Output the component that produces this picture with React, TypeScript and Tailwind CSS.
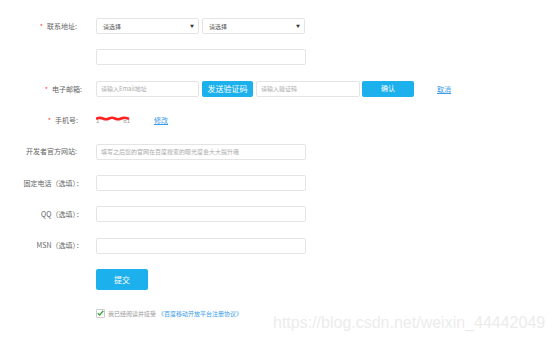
import type { ReactNode } from 'react';

function Field({ label, required, pr = 'pr-[14px]', children }: { label: string; required?: boolean; pr?: string; children?: ReactNode }) {
  return (
    <div className="flex items-center h-[16px]">
      <div className={`w-[96px] shrink-0 flex justify-end items-center text-[7px] text-[#666] ${pr}`}>
        {required && <span className="text-[#f44] mr-[4px]">*</span>}
        <span>{label}</span>
      </div>
      {children}
    </div>
  );
}

function Box({ w, placeholder }: { w: string; placeholder?: string }) {
  return (
    <div className={`${w} h-[16px] border border-[#e4e4e4] rounded-[2px] bg-white flex items-center px-[4px] text-[6px] text-[#aaa]`}>
      {placeholder}
    </div>
  );
}

function Select() {
  return (
    <div className="w-[103px] h-[16px] border border-[#e4e4e4] rounded-[2px] bg-white flex items-center justify-between pl-[6px] pr-[4px] text-[6px] text-[#555]">
      <span>请选择</span>
      <span className="text-[4px] text-[#333]">▼</span>
    </div>
  );
}

export default function App() {
  return (
    <div className="relative w-[554px] h-[344px] bg-white overflow-hidden font-['Noto_Sans_CJK_SC',sans-serif]">
      <div className="flex flex-col gap-[15.4px] pt-[18px]">
        <Field label="联系地址:" required pr="pr-[19px]">
          <div className="flex gap-[3px]">
            <Select />
            <Select />
          </div>
        </Field>

        <Field label="">
          <Box w="w-[210px]" />
        </Field>

        <Field label="电子邮箱:" required pr="pr-[14px]">
          <div className="flex items-center">
            <Box w="w-[103px]" placeholder="请输入Email地址" />
            <button className="ml-[3px] w-[51px] h-[16px] rounded-[2px] bg-[#1cb0ec] text-white text-[8px] leading-none">发送验证码</button>
            <div className="ml-[3px]">
              <Box w="w-[104px]" placeholder="请输入验证码" />
            </div>
            <button className="ml-[2px] w-[52px] h-[16px] rounded-[2px] bg-[#1cb0ec] text-white text-[7px] leading-none">确认</button>
            <span className="ml-[23px] text-[7px] text-[#3a9be8] underline">取消</span>
          </div>
        </Field>

        <Field label="手机号:" required pr="pr-[18px]">
          <div className="flex items-center">
            <div className="relative w-[34px] h-[8px] text-[6px] text-[#999] leading-none flex items-end">
              <span>1**</span>
              <span className="ml-auto">*61</span>
              <svg className="absolute left-0 top-[0px]" width="34" height="5" viewBox="0 0 34 5">
                <path d="M1 2.5 Q4 1 7 2.5 T13 2.5 T19 2.5 T25 2.5 T32 2.5" stroke="#f22" strokeWidth="2.6" fill="none" strokeLinecap="round" />
              </svg>
            </div>
            <span className="ml-[24px] text-[7px] text-[#3a9be8] underline">修改</span>
          </div>
        </Field>

        <Field label="开发者官方网站:" pr="pr-[19px]">
          <Box w="w-[210px]" placeholder="填写之后您的官网在百度搜索的曝光度会大大提升哦" />
        </Field>

        <Field label="固定电话（选填）：" pr="pr-[13px]">
          <Box w="w-[210px]" />
        </Field>

        <Field label="QQ（选填）：" pr="pr-[13px]">
          <Box w="w-[210px]" />
        </Field>

        <Field label="MSN（选填）：" pr="pr-[13px]">
          <Box w="w-[210px]" />
        </Field>

        <div className="pl-[96px] flex">
          <button className="w-[52px] h-[21px] rounded-[2px] bg-[#1cb0ec] text-white text-[8px] leading-none">提交</button>
        </div>

        <div className="pl-[96px] mt-[3px] flex items-center text-[6px]">
          <span className="w-[9px] h-[9px] border border-[#ccc] rounded-[1px] flex items-center justify-center">
            <svg width="7" height="6" viewBox="0 0 7 6">
              <path d="M0.8 3.2 L2.7 5 L6.3 0.8" stroke="#3ca83c" strokeWidth="1.4" fill="none" />
            </svg>
          </span>
          <span className="ml-[3px] text-[#999]">我已经阅读并接受</span>
          <span className="ml-[2px] text-[#3a9be8]">《百度移动开放平台注册协议》</span>
        </div>
      </div>

      <div className="absolute left-[273px] top-[311px] text-[16px] text-[#ececec] font-['Liberation_Sans',sans-serif]">
        https://blog.csdn.net/weixin_44442049
      </div>
    </div>
  );
}
